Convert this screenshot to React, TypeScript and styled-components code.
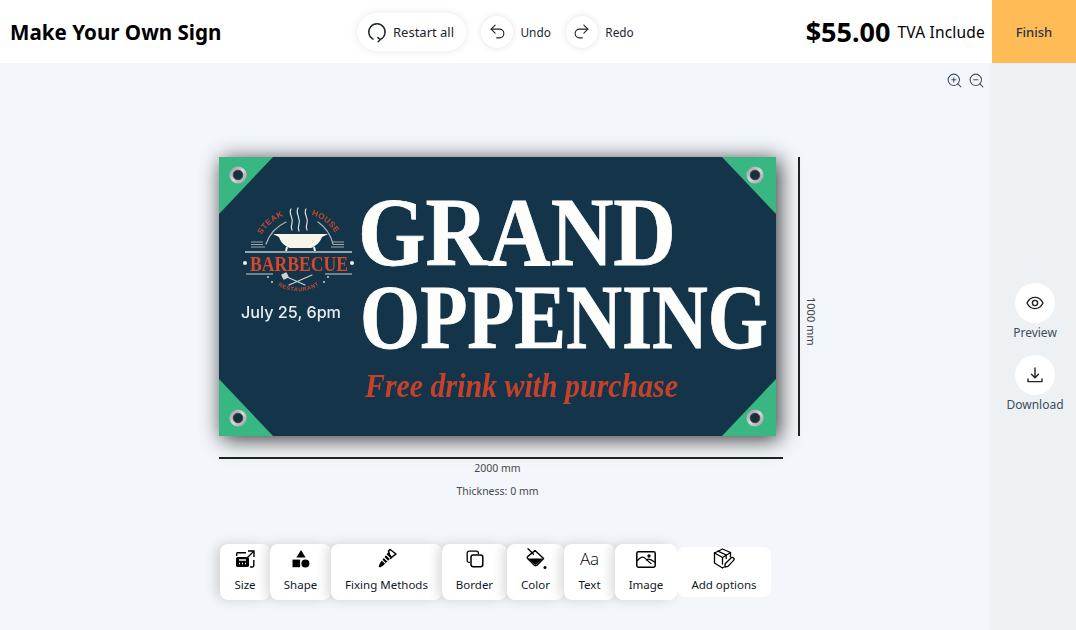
import React from "react";
import styled, { createGlobalStyle } from "styled-components";
import { Undo2, Redo2, ZoomIn, ZoomOut } from "lucide-react";

const Global = createGlobalStyle`
  html, body { margin: 0; padding: 0; height: 100%; overflow: hidden; }
  body { font-family: "Noto Sans", "Open Sans", "Liberation Sans", sans-serif; background: #f3f6fa; color: #000; }
  #root { height: 100%; }
`;

const Page = styled.div`
  display: flex;
  flex-direction: column;
  width: 1076px;
  height: 630px;
  background: #f3f6fa;
`;
const Header = styled.header`
  display: flex;
  align-items: center;
  height: 63px;
  background: #fff;
  flex: none;
  position: relative;
  z-index: 2;
`;
const Title = styled.h1`
  margin: 0 0 0 10px;
  width: 347px;
  font-size: 20.6px;
  font-weight: 700;
  line-height: 30px;
  white-space: nowrap;
`;
const RestartPill = styled.div`
  display: flex;
  align-items: center;
  gap: 6px;
  width: 109px;
  height: 38px;
  box-sizing: border-box;
  padding-left: 10px;
  border-radius: 19px;
  background: #fff;
  box-shadow: 0 0 8px rgba(0, 0, 0, 0.1);
  font-size: 13px;
  color: #1c2430;
  white-space: nowrap;
`;
const RoundAction = styled.div<{ $left: number }>`
  display: flex;
  align-items: center;
  gap: 7.5px;
  margin-left: ${(p) => p.$left}px;
  font-size: 11.8px;
  color: #1c2430;
`;
const RoundButton = styled.div`
  display: flex;
  align-items: center;
  justify-content: center;
  width: 32px;
  height: 32px;
  border-radius: 50%;
  background: #fff;
  box-shadow: 0 0 6px rgba(0, 0, 0, 0.12);
  color: #222;
`;
const PriceBox = styled.div`
  display: flex;
  align-items: center;
  margin-left: auto;
  margin-right: 7px;
  gap: 7px;
`;
const Price = styled.span`
  font-size: 27px;
  font-weight: 700;
  line-height: 32px;
`;
const Tva = styled.span`
  font-size: 15.5px;
  line-height: 20px;
  letter-spacing: 0.2px;
`;
const Finish = styled.div`
  display: flex;
  align-items: center;
  justify-content: center;
  width: 84px;
  height: 63px;
  background: #ffbb55;
  font-size: 13px;
  font-weight: 500;
  color: #2a3548;
`;
const Body = styled.div`
  display: flex;
  flex: 1;
  min-height: 0;
`;
const Main = styled.main`
  flex: 1;
  display: flex;
  flex-direction: column;
  min-width: 0;
`;
const ZoomBar = styled.div`
  display: flex;
  justify-content: flex-end;
  gap: 5px;
  padding: 9px 6px 0 0;
  height: 17px;
  color: #445063;
`;
const Stage = styled.div`
  display: flex;
  flex-direction: column;
  padding: 68px 0 0 219px;
`;
const SignRow = styled.div`
  display: flex;
  align-items: stretch;
  height: 279px;
`;
const Sign = styled.div`
  width: 557px;
  height: 279px;
  flex: none;
  box-shadow: 3px 3px 20px rgba(0, 0, 0, 0.8);
  svg { display: block; }
`;
const VLine = styled.div`
  width: 2px;
  margin-left: 22px;
  background: #222;
`;
const VLabel = styled.div`
  writing-mode: vertical-rl;
  align-self: center;
  margin: 0 0 0 4px;
  font-size: 11px;
  color: #444;
  padding-top: 50px;
`;
const HLine = styled.div`
  width: 564px;
  height: 2px;
  margin-top: 21px;
  background: #222;
`;
const CanvasLabel = styled.div<{ $top: number }>`
  width: 557px;
  margin-top: ${(p) => p.$top}px;
  text-align: center;
  font-size: 10.5px;
  line-height: 14px;
  color: #4a4a4a;
`;
const Toolbar = styled.div`
  display: flex;
  align-items: center;
  margin: 46px 0 0 220px;
  height: 56px;
`;
const Tool = styled.div<{ $w: number; $flat?: boolean }>`
  display: flex;
  flex-direction: column;
  align-items: center;
  width: ${(p) => p.$w}px;
  height: ${(p) => (p.$flat ? 50 : 56)}px;
  box-sizing: border-box;
  padding-top: ${(p) => (p.$flat ? 2 : 5)}px;
  background: #fff;
  border-radius: 8px;
  box-shadow: ${(p) => (p.$flat ? "none" : "-4px 0 12px rgba(0, 0, 0, 0.15)")};
  position: relative;
`;
const ToolIcon = styled.div`
  display: flex;
  align-items: center;
  justify-content: center;
  height: 20px;
  color: #000;
`;
const ToolLabel = styled.div`
  margin-top: 6px;
  font-size: 11.5px;
  line-height: 20px;
  color: #101828;
  white-space: nowrap;
`;
const AaGlyph = styled.span`
  font-family: "Open Sans", sans-serif;
  font-size: 17px;
  font-weight: 300;
  line-height: 20px;
  color: #000;
`;
const Sidebar = styled.aside`
  width: 85px;
  flex: none;
  box-sizing: border-box;
  padding: 3px 0 0 3px;
  display: flex;
  flex-direction: column;
  align-items: center;
  justify-content: center;
  gap: 13px;
  background: #edf1f4;
  box-shadow: -2px 0 4px rgba(0, 0, 0, 0.025);
`;
const SideItem = styled.div`
  display: flex;
  flex-direction: column;
  align-items: center;
`;
const SideButton = styled.div`
  display: flex;
  align-items: center;
  justify-content: center;
  width: 40px;
  height: 40px;
  border-radius: 50%;
  background: #fff;
  color: #222;
`;
const SideLabel = styled.div`
  margin-top: 1px;
  font-size: 12px;
  line-height: 18px;
  color: #3f4d5f;
`;

const Grommet = ({ x, y }: { x: number; y: number }) => (
  <g>
    <circle cx={x} cy={y} r={8.6} fill="url(#metal)" />
    <circle cx={x} cy={y} r={4.8} fill="#17303f" stroke="#3d4449" strokeWidth={1} />
  </g>
);

const Dot = ({ x, y }: { x: number; y: number }) => <circle cx={x} cy={y} r={0.9} fill="#dfe3e1" />;

const SignArt = () => (
  <svg width="557" height="279" viewBox="0 0 557 279">
    <defs>
      <filter id="soft" x="-5%" y="-5%" width="110%" height="110%">
        <feGaussianBlur stdDeviation="0.35" />
      </filter>
      <linearGradient id="metal" x1="0" y1="0" x2="1" y2="1">
        <stop offset="0" stopColor="#8e9295" />
        <stop offset="0.5" stopColor="#d6d8d9" />
        <stop offset="1" stopColor="#94989b" />
      </linearGradient>
      <path id="arcTop" d="M39 86 A43 43 0 0 1 121 86" />
      <path id="arcBot" d="M52 123 A38 38 0 0 0 106 123" />
    </defs>
    <rect width="557" height="279" fill="#14344a" />
    <g fill="#38b782">
      <polygon points="0,0 54,0 0,57" />
      <polygon points="557,0 503,0 557,57" />
      <polygon points="0,279 54,279 0,222" />
      <polygon points="557,279 503,279 557,222" />
    </g>
    <Grommet x={19} y={18} />
    <Grommet x={536} y={18} />
    <Grommet x={19} y={261} />
    <Grommet x={536} y={261} />
    <g filter="url(#soft)">
      <text x="139" y="108" textLength="318" lengthAdjust="spacingAndGlyphs" fontFamily="'Liberation Serif', serif" fontWeight="700" fontSize="98" fill="#fdfdfb" stroke="#fdfdfb" strokeWidth="0.8">GRAND</text>
      <text x="141" y="191" textLength="408" lengthAdjust="spacingAndGlyphs" fontFamily="'Liberation Serif', serif" fontWeight="700" fontSize="91" fill="#fdfdfb" stroke="#fdfdfb" strokeWidth="0.8">OPPENING</text>
      <text x="146" y="240" textLength="313" lengthAdjust="spacingAndGlyphs" fontFamily="'Liberation Serif', serif" fontStyle="italic" fontWeight="700" fontSize="33" fill="#c6402a">Free drink with purchase</text>

      <text fontFamily="'Liberation Sans', sans-serif" fontWeight="700" fontSize="8" fill="#c9482b" letterSpacing="0.5">
        <textPath href="#arcTop" startOffset="9">STEAK</textPath>
      </text>
      <text fontFamily="'Liberation Sans', sans-serif" fontWeight="700" fontSize="8" fill="#c9482b" letterSpacing="0.5">
        <textPath href="#arcTop" startOffset="67">HOUSE</textPath>
      </text>
      <g fill="none" stroke="#dfe3e1" strokeWidth="1.2" strokeLinecap="round">
        <path d="M72 52 c-3 5 3 9 1 14 c-1 3 -1 5 0 7" />
        <path d="M79 51 c-3 6 3 10 1 16 c-1 3 -1 5 0 7" />
        <path d="M87 52 c-3 5 3 9 1 14 c-1 3 -1 5 0 7" />
        <path d="M47 87 A38 38 0 0 1 67 65" stroke="#aab7ba" />
        <path d="M114 87 A38 38 0 0 0 99 65" stroke="#aab7ba" />
      </g>
      <path d="M59 77 H104 C102 85 97 89 92 91 H71 C65 89 61 85 59 77 Z" fill="#f6f5ea" />
      <path d="M54 77 L60 77 L60 80 Z M109 77 L103 77 L103 80 Z" fill="#f6f5ea" />
      <path d="M68 90 L67 94 M95 90 L96 94" stroke="#f6f5ea" strokeWidth="2" />
      <g stroke="#9aa9ae" strokeWidth="1.1">
        <path d="M32 85 H44 M32 87.5 H44 M32 90 H46" />
        <path d="M114 85 H125 M114 87.5 H125 M112 90 H125" />
      </g>
      <path d="M26 95 H133" stroke="#c5ced0" strokeWidth="1.5" />
      <text x="31" y="114" textLength="98" lengthAdjust="spacingAndGlyphs" fontFamily="'Liberation Serif', serif" fontWeight="700" fontSize="20" fill="#d8482a">BARBECUE</text>
      <circle cx="26" cy="106" r="2" fill="#f0f0ea" />
      <circle cx="133" cy="106" r="2" fill="#f0f0ea" />
      <path d="M27 117 H54 M106 117 H133" stroke="#c5ced0" strokeWidth="1.2" />
      <g stroke="#c9d1d2" strokeWidth="1.2" strokeLinecap="round" fill="none">
        <path d="M68 120 L86 128" />
        <path d="M70 128 L93 118" />
      </g>
      <rect x="63" y="116" width="6" height="6" rx="1" fill="#c9d1d2" transform="rotate(-25 66 119)" />
      <Dot x={49} y={120} />
      <Dot x={53} y={125} />
      <Dot x={105} y={125} />
      <Dot x={109} y={120} />
      <text fontFamily="'Liberation Sans', sans-serif" fontWeight="700" fontSize="5.4" fill="#c9482b" letterSpacing="0.7">
        <textPath href="#arcBot" startOffset="9">RESTAURANT</textPath>
      </text>
      <text x="22" y="161" textLength="100" lengthAdjust="spacingAndGlyphs" fontFamily="Inter, 'Open Sans', sans-serif" fontWeight="500" fontSize="16.5" fill="#e6ecef">July 25, 6pm</text>
    </g>
  </svg>
);

const S = { stroke: "currentColor", fill: "none", strokeLinecap: "round" as const, strokeLinejoin: "round" as const };

const RestartIcon = () => (
  <svg width="20" height="22" viewBox="0 0 20 22" {...S} strokeWidth="1.4">
    <path d="M6 18.2 A8.2 8.2 0 1 1 13.5 18.4" />
    <path d="M10.8 16.6 L13.3 18.6 L11.2 20.8" />
  </svg>
);
const EyeIcon = () => (
  <svg width="18" height="14" viewBox="0 0 18 14" {...S} strokeWidth="1.4">
    <path d="M1 7 C3 3 6 1.4 9 1.4 S15 3 17 7 C15 11 12 12.6 9 12.6 S3 11 1 7 Z" />
    <circle cx="9" cy="7" r="2.6" />
  </svg>
);
const DownloadIcon = () => (
  <svg width="16" height="16" viewBox="0 0 16 16" {...S} strokeWidth="1.4">
    <path d="M8 1 V10.5 M4.5 7.2 L8 10.8 L11.5 7.2" />
    <path d="M1 12 V14.6 H15 V12" />
  </svg>
);
const SizeIcon = () => (
  <svg width="20" height="18" viewBox="0 0 20 18">
    <path d="M1 3.5 A1.5 1.5 0 0 1 2.5 2 H11 V3.4 H2.4 V6 H1 Z" fill="#000" />
    <path d="M13 1 H19 V7 M19 1 L12.5 7.5" fill="none" stroke="#000" strokeWidth="1.4" />
    <path d="M18.8 10 V15.6 A1.4 1.4 0 0 1 17.4 17 H15" fill="none" stroke="#000" strokeWidth="1.4" />
    <rect x="1" y="7" width="13" height="10" rx="1.8" fill="#000" />
    <path d="M4 10 H11 M4 13.5 H5 M7 13.5 H8 M10 13.5 H11" stroke="#fff" strokeWidth="1.4" />
  </svg>
);
const ShapeIcon = () => (
  <svg width="18" height="18" viewBox="0 0 18 18" fill="#000">
    <polygon points="9,0 13.6,7.4 4.4,7.4" />
    <rect x="0.5" y="9.6" width="7.6" height="7.6" />
    <circle cx="13.4" cy="13.4" r="4" />
  </svg>
);
const ScrewIcon = () => (
  <svg width="20" height="20" viewBox="0 0 20 20">
    <path d="M11.5 2 L13 .5 L19 5 L16.5 6.8 L13.5 9.5 Z" fill="none" stroke="#000" strokeWidth="1.5" strokeLinejoin="round" />
    <path d="M11 3.6 L15 7.8 L6 16.8 L3 18.6 L1.6 17.4 L3 14 Z" fill="#000" />
    <path d="M9 5.5 L13 9.5 M6.6 8 L10.6 12 M4.4 10.4 L8.4 14.4" stroke="#fff" strokeWidth="1.1" />
  </svg>
);
const BorderIcon = () => (
  <svg width="18" height="18" viewBox="0 0 18 18" {...S} strokeWidth="1.3">
    <path d="M3.5 12.4 H3 A1.8 1.8 0 0 1 1.2 10.6 V3 A1.8 1.8 0 0 1 3 1.2 H10.6 A1.8 1.8 0 0 1 12.4 3 V3.5" />
    <rect x="5" y="5" width="11.8" height="11.8" rx="2.2" strokeWidth="1.5" />
  </svg>
);
const BucketIcon = () => (
  <svg width="22" height="22" viewBox="0 0 22 22">
    <path d="M3 .8 L8.5 6.2" fill="none" stroke="#000" strokeWidth="1.3" strokeLinecap="round" />
    <path d="M10 2.6 L18.6 10.6 L12 17.2 A2 2 0 0 1 9.4 17.2 L2.6 10.6 A1.6 1.6 0 0 1 2.6 8.6 Z" fill="none" stroke="#000" strokeWidth="1.4" strokeLinejoin="round" />
    <path d="M3 10.4 H18 L11.6 16.6 A1.6 1.6 0 0 1 9.8 16.6 Z" fill="#000" />
    <circle cx="20" cy="19.6" r="1.5" fill="#000" />
  </svg>
);
const PictureIcon = () => (
  <svg width="20" height="17" viewBox="0 0 20 17" {...S} strokeWidth="1.3">
    <rect x="0.8" y="0.8" width="18.4" height="15.4" rx="1.6" strokeWidth="1.5" />
    <path d="M1.5 9.5 C4 6.5 6 5.5 8 6.5 C10 7.5 12 10.5 15 12.5 M10.5 9 C12 7.5 14 7.5 18.5 11" />
    <circle cx="13" cy="5" r="1" />
  </svg>
);
const PackageIcon = () => (
  <svg width="22" height="22" viewBox="0 0 22 22" {...S} strokeWidth="1.3">
    <path d="M1.5 5 L9.5 1 L17.5 4.5 V9" />
    <path d="M1.5 5 V15 L9.5 20 L10.5 19.3" />
    <path d="M1.5 5 L9.5 9.5 V16 M9.5 9.5 L17.5 4.5" />
    <path d="M5 3.2 L13.2 7 V10.6" />
    <path d="M11.8 19 L12.2 15.8 L18 10 A1.6 1.6 0 0 1 20.6 12.4 L15 18.4 Z" />
  </svg>
);

const tools = [
  { label: "Size", w: 50, icon: <SizeIcon /> },
  { label: "Shape", w: 61, icon: <ShapeIcon /> },
  { label: "Fixing Methods", w: 111, icon: <ScrewIcon /> },
  { label: "Border", w: 65, icon: <BorderIcon /> },
  { label: "Color", w: 57, icon: <BucketIcon /> },
  { label: "Text", w: 51, icon: <AaGlyph>Aa</AaGlyph> },
  { label: "Image", w: 62, icon: <PictureIcon /> },
];

export default function App() {
  return (
    <Page>
      <Global />
      <Header>
        <Title>Make Your Own Sign</Title>
        <RestartPill>
          <RestartIcon />
          Restart all
        </RestartPill>
        <RoundAction $left={15}>
          <RoundButton><Undo2 size={19} strokeWidth={1.4} /></RoundButton>
          Undo
        </RoundAction>
        <RoundAction $left={15}>
          <RoundButton><Redo2 size={19} strokeWidth={1.4} /></RoundButton>
          Redo
        </RoundAction>
        <PriceBox>
          <Price>$55.00</Price>
          <Tva>TVA Include</Tva>
        </PriceBox>
        <Finish>Finish</Finish>
      </Header>
      <Body>
        <Main>
          <ZoomBar>
            <ZoomIn size={17} strokeWidth={1.5} />
            <ZoomOut size={17} strokeWidth={1.5} />
          </ZoomBar>
          <Stage>
            <SignRow>
              <Sign><SignArt /></Sign>
              <VLine />
              <VLabel>1000 mm</VLabel>
            </SignRow>
            <HLine />
            <CanvasLabel $top={2}>2000 mm</CanvasLabel>
            <CanvasLabel $top={9}>Thickness: 0 mm</CanvasLabel>
          </Stage>
          <Toolbar>
            {tools.map((t) => (
              <Tool key={t.label} $w={t.w}>
                <ToolIcon>{t.icon}</ToolIcon>
                <ToolLabel>{t.label}</ToolLabel>
              </Tool>
            ))}
            <Tool $w={94} $flat>
              <ToolIcon><PackageIcon /></ToolIcon>
              <ToolLabel>Add options</ToolLabel>
            </Tool>
          </Toolbar>
        </Main>
        <Sidebar>
          <SideItem>
            <SideButton><EyeIcon /></SideButton>
            <SideLabel>Preview</SideLabel>
          </SideItem>
          <SideItem>
            <SideButton><DownloadIcon /></SideButton>
            <SideLabel>Download</SideLabel>
          </SideItem>
        </Sidebar>
      </Body>
    </Page>
  );
}
